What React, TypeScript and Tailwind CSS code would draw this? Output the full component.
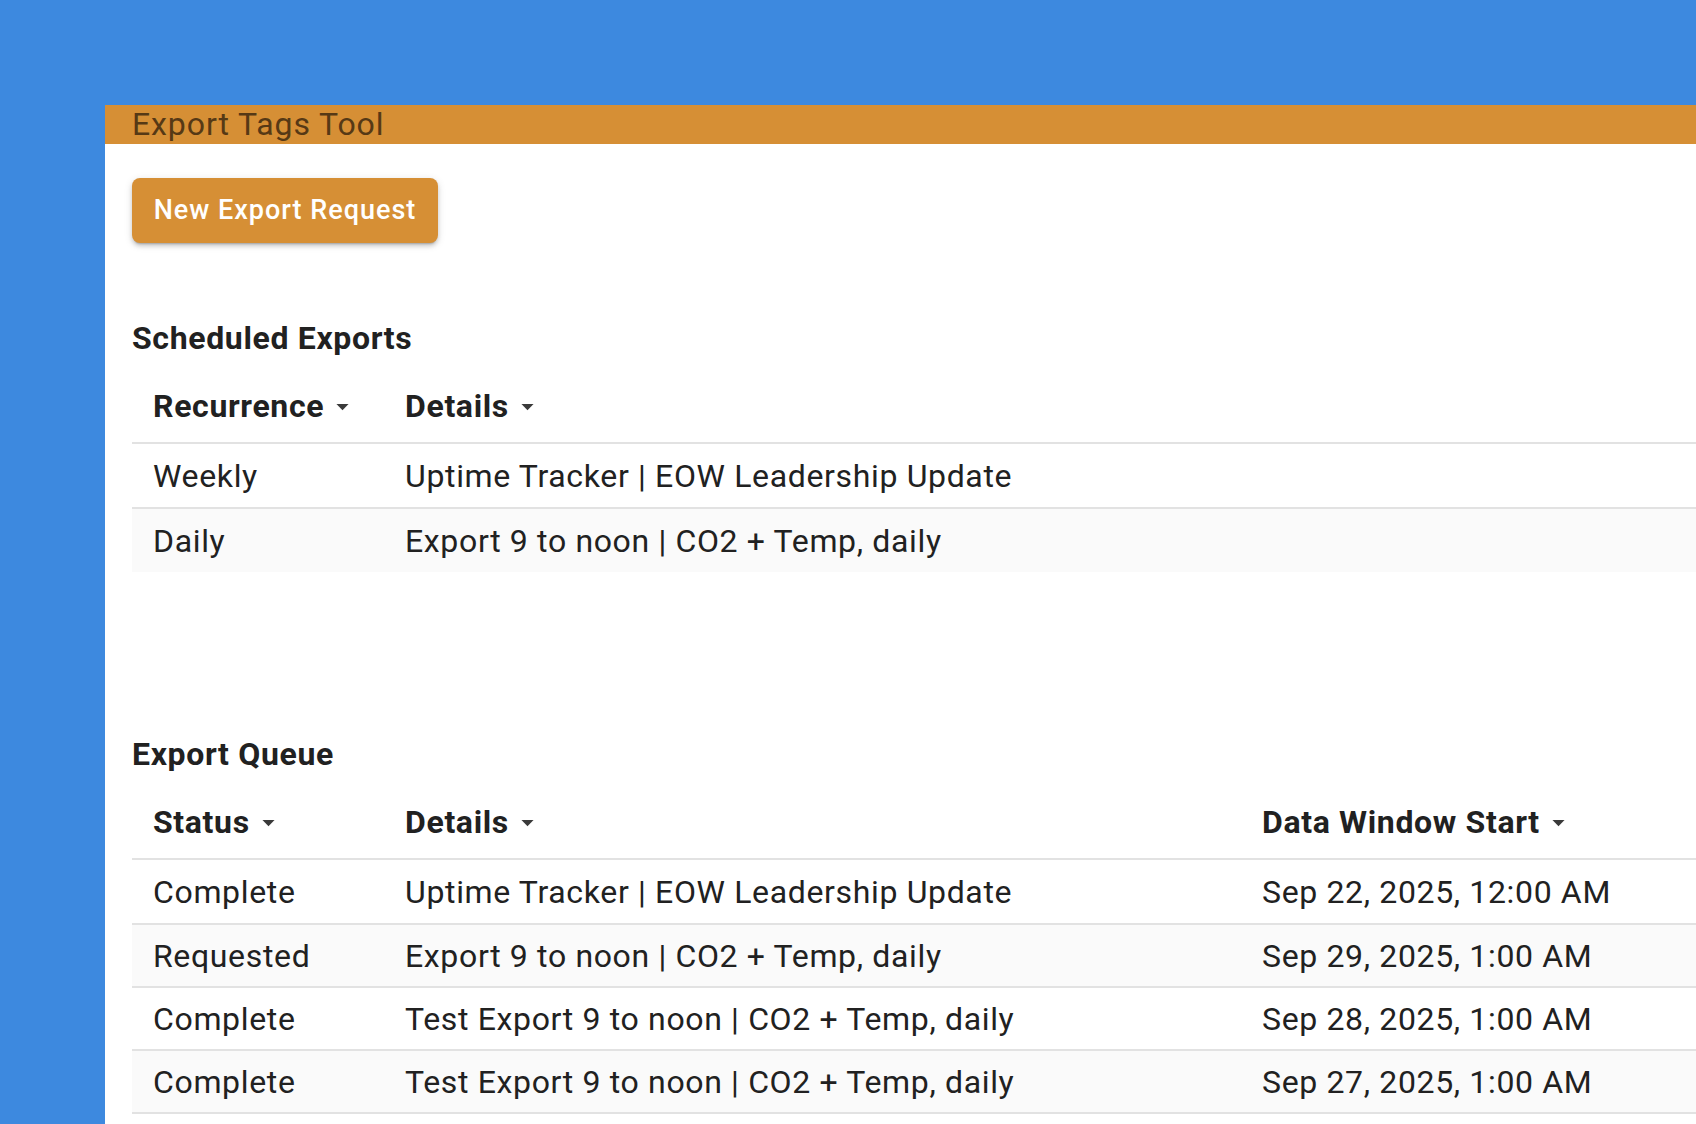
import React from "react";

type Column = { key: string; label: string; width: string };

const scheduledColumns: Column[] = [
  { key: "recurrence", label: "Recurrence", width: "w-[252px]" },
  { key: "details", label: "Details", width: "flex-1" },
];

const scheduledRows = [
  { recurrence: "Weekly", details: "Uptime Tracker | EOW Leadership Update" },
  { recurrence: "Daily", details: "Export 9 to noon | CO2 + Temp, daily" },
];

const queueColumns: Column[] = [
  { key: "status", label: "Status", width: "w-[252px]" },
  { key: "details", label: "Details", width: "w-[857px]" },
  { key: "start", label: "Data Window Start", width: "flex-1" },
];

const queueRows = [
  { status: "Complete", details: "Uptime Tracker | EOW Leadership Update", start: "Sep 22, 2025, 12:00 AM" },
  { status: "Requested", details: "Export 9 to noon | CO2 + Temp, daily", start: "Sep 29, 2025, 1:00 AM" },
  { status: "Complete", details: "Test Export 9 to noon | CO2 + Temp, daily", start: "Sep 28, 2025, 1:00 AM" },
  { status: "Complete", details: "Test Export 9 to noon | CO2 + Temp, daily", start: "Sep 27, 2025, 1:00 AM" },
];

function SortArrow() {
  return (
    <svg viewBox="0 0 24 24" className="ml-[4px] h-[29px] w-[29px] shrink-0" fill="#3a3a3a">
      <path d="M7 10l5 5 5-5z" />
    </svg>
  );
}

function DataTable({
  columns,
  rows,
  lastBorder,
}: {
  columns: Column[];
  rows: Record<string, string>[];
  lastBorder: boolean;
}) {
  return (
    <div className="text-[32px] tracking-[0.65px] text-[#212121]">
      <div className="flex h-[69px] items-center border-b-2 border-[#e2e2e2] pb-[5px]">
        {columns.map((col) => (
          <div key={col.key} className={`${col.width} flex items-center pl-[21px] font-bold leading-[32px]`}>
            <span>{col.label}</span>
            <SortArrow />
          </div>
        ))}
      </div>
      {rows.map((row, i) => (
        <div
          key={i}
          className={`flex ${i === 0 ? "h-[65px]" : "h-[63px]"} items-center ${
            i % 2 === 1 ? "bg-[#fafafa]" : "bg-white"
          } ${i < rows.length - 1 || lastBorder ? "border-b-2 border-[#e2e2e2]" : ""}`}
        >
          {columns.map((col) => (
            <div key={col.key} className={`${col.width} pl-[21px] leading-[32px] whitespace-nowrap`}>
              {row[col.key]}
            </div>
          ))}
        </div>
      ))}
    </div>
  );
}

export default function App() {
  return (
    <div
      className="min-h-screen bg-[#3d89df] pl-[105px] pt-[105px]"
      style={{ fontFamily: "Roboto, 'Noto Sans', sans-serif" }}
    >
      <div className="min-h-[1019px] bg-white">
        <div className="h-[39px] bg-[#d68f35] pl-[27px] pt-[3px] text-[32px] leading-[32px] tracking-[0.9px] text-[#563915]">
          Export Tags Tool
        </div>
        <div className="pl-[27px]">
          <button className="mt-[34px] h-[65px] w-[306px] rounded-[8px] bg-[#d68f35] text-[27px] font-medium tracking-[1px] text-white shadow-[0_3px_2px_-2px_rgba(0,0,0,0.2),0_3px_4px_0_rgba(0,0,0,0.14),0_2px_9px_0_rgba(0,0,0,0.12)]">
            New Export Request
          </button>

          <h2 className="mt-[79px] text-[32px] font-bold leading-[32px] tracking-[0.65px] text-[#212121]">
            Scheduled Exports
          </h2>
          <div className="mt-[21px]">
            <DataTable columns={scheduledColumns} rows={scheduledRows} lastBorder={false} />
          </div>

          <h2 className="mt-[166px] text-[32px] font-bold leading-[32px] tracking-[0.65px] text-[#212121]">
            Export Queue
          </h2>
          <div className="mt-[21px]">
            <DataTable columns={queueColumns} rows={queueRows} lastBorder={true} />
          </div>
        </div>
      </div>
    </div>
  );
}
